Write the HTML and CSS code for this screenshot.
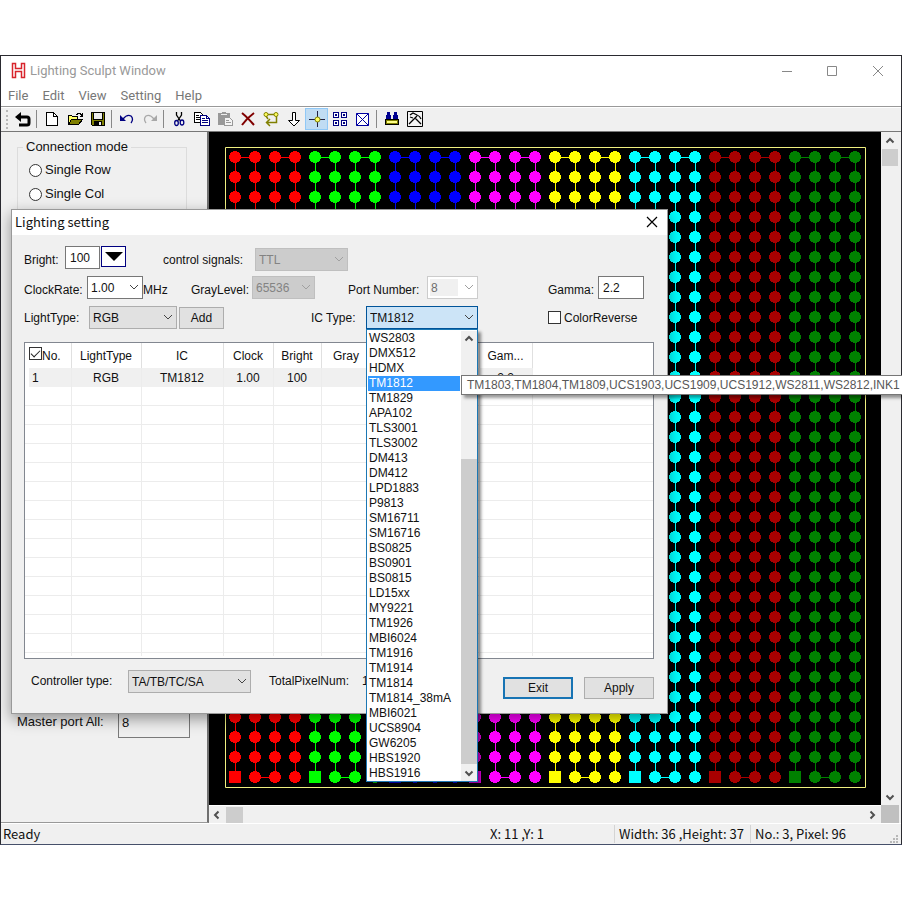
FILE: index.html
```
<!DOCTYPE html>
<html lang="en">
<head>
<meta charset="utf-8">
<title>Lighting Sculpt Window</title>
<link rel="stylesheet" href="styles.css">
</head>
<body>
<svg class="defs" aria-hidden="true">
  <defs>
    <symbol id="chevron" viewBox="0 0 10 10"><path d="M1 3l4 4 4-4" fill="none" stroke="currentColor"/></symbol>
    <symbol id="arrow" viewBox="0 0 10 10"><path d="M1.500 6.500L5 3l3.500 3.500" fill="none" stroke="currentColor" stroke-width="2"/></symbol>
    <symbol id="block" viewBox="0 0 80 640" overflow="visible">
      <path class="wire" d="M.5 0V620M20.500 0V620M40.500 0V620M60.500 0V620M0 .5H20M40 .5H60M20 620.500H40"/>
      <path class="dots" d="M0 0V601M20 0V621M40 0V621M60 0V621"/>
      <path d="M-6 614H6V626H-6z" fill="currentColor"/>
    </symbol>
  </defs>
</svg>

<div class="window">
  <header class="titlebar">
    <svg class="logo" width="16" height="17" viewBox="0 0 16 17"><path d="M1.500 1.500h3v5h6v-5h3v14h-3v-6h-6v6h-3z" fill="#fff" stroke="#d8242c" stroke-width="1.500"/></svg>
    <h1 class="caption">Lighting Sculpt Window</h1>
    <div class="captions">
      <button class="cap" aria-label="Minimize"><svg width="12" height="12"><path d="M1 6.500h10" stroke="#888"/></svg></button>
      <button class="cap" aria-label="Maximize"><svg width="12" height="12"><path d="M1.500 1.500h9v9h-9z" fill="none" stroke="#888"/></svg></button>
      <button class="cap" aria-label="Close"><svg width="12" height="12"><path d="M1 1l10 10M11 1L1 11" stroke="#888"/></svg></button>
    </div>
  </header>
  <nav class="menubar">
    <button>File</button><button>Edit</button><button>View</button><button>Setting</button><button>Help</button>
  </nav>

  <div class="toolbar">
    <button aria-label="Back"><svg viewBox="0 0 16 16"><path d="M0 6l6-5v10z"/><path d="M5 6h7q2 0 2 2v4q0 2-2 2H4" fill="none" stroke="#000" stroke-width="3"/></svg></button>
    <i></i>
    <button aria-label="New"><svg viewBox="0 0 16 16" shape-rendering="crispEdges"><path d="M2.500 1.500h7l4 4v9h-11z" fill="#fff" stroke="#000"/><path d="M9.500 1.500v4h4" fill="none" stroke="#000"/></svg></button>
    <button aria-label="Open"><svg viewBox="0 0 16 16" shape-rendering="crispEdges"><path d="M1.500 13.500v-9h3l1 1h5v3" fill="#ffff66" stroke="#000"/><path d="M1.500 13.500l3-5h11l-4 5z" fill="#808000" stroke="#000"/><path d="M9 3.500h1v-1h3v1h1v1h1M15.500 2v3h-3" fill="none" stroke="#000"/></svg></button>
    <button aria-label="Save"><svg viewBox="0 0 16 16" shape-rendering="crispEdges"><path d="M1.500 1.500h13v13h-12l-1-1z" fill="#808000" stroke="#000"/><path d="M4 2h8v6H4z" fill="#eee"/><path d="M3.500 2v6.500h9V2" fill="none" stroke="#000"/><path d="M4 10h8v4H4z"/><path d="M9 11h2v3H9z" fill="#eee"/></svg></button>
    <i></i>
    <button aria-label="Undo"><svg viewBox="0 0 16 16"><path d="M1 4v6h6z" fill="#000080"/><path d="M4 8q4-5 8-3 3 3 0 7" fill="none" stroke="#000080" stroke-width="1.300"/></svg></button>
    <button aria-label="Redo"><svg viewBox="0 0 16 16"><path d="M15 4v6H9z" fill="#a8a8a8"/><path d="M12 8q-4-5-8-3-3 3 0 7" fill="none" stroke="#a8a8a8" stroke-width="1.300"/></svg></button>
    <i></i>
    <button aria-label="Cut"><svg viewBox="0 0 16 16"><path d="M5.500 1v3l4 6M10.500 1v3l-4 6" fill="none" stroke="#000" stroke-width="1.300"/><ellipse cx="5.500" cy="12" rx="1.800" ry="2.500" fill="none" stroke="#000080" stroke-width="1.300"/><ellipse cx="11" cy="11.500" rx="1.800" ry="2.500" fill="none" stroke="#000080" stroke-width="1.300"/></svg></button>
    <button aria-label="Copy"><svg viewBox="0 0 16 16" shape-rendering="crispEdges"><path d="M.5 1.500h6l3 3v7h-9z" fill="#fff" stroke="#000"/><path d="M2 4.500h3M2 6.500h4M2 8.500h4" stroke="#000"/><path d="M6.500 4.500h6l3 3v7h-9z" fill="#fff" stroke="#000080"/><path d="M12.500 4.500v3h3M8 7.500h3M8 9.500h6M8 11.500h6" fill="none" stroke="#000080"/></svg></button>
    <button aria-label="Paste"><svg viewBox="0 0 16 16" shape-rendering="crispEdges"><path d="M1 2h4V1h4v1h4v12H1z" fill="#999"/><path d="M4 3h6v1H4z" fill="#eee"/><path d="M7.500 6.500h5l3 3v5h-8z" fill="#f4f4f4" stroke="#999"/><path d="M9 9.500h3M9 11.500h5" stroke="#999"/></svg></button>
    <button aria-label="Delete"><svg viewBox="0 0 16 16"><path d="M2 2q5 4 12 12M14 2Q7 7 2 14" fill="none" stroke="#800000" stroke-width="2"/></svg></button>
    <button aria-label="Link nodes"><svg viewBox="0 0 16 16"><path d="M5 3.500h7M13.500 5v6.500H4M3 5l2 3M7 8l-3.500 3.500L7 15" fill="none" stroke="#808000" stroke-width="1.500"/><circle cx="3" cy="3.500" r="2" fill="#ffff60" stroke="#808000"/><circle cx="13" cy="3.500" r="2" fill="#ffff60" stroke="#808000"/></svg></button>
    <button aria-label="Download"><svg viewBox="0 0 16 16"><path d="M6.500 1.500h3v8h4l-5.500 5.500-5.500-5.500h4z" fill="#fff" stroke="#000"/></svg></button>
    <button class="on" aria-label="Point mode"><svg viewBox="0 0 16 16"><path d="M8.500 0v16M0 8.500h16" stroke="#202040"/><circle cx="8.500" cy="8.500" r="2.500" fill="#ffff60" stroke="#808000"/></svg></button>
    <button aria-label="Grid"><svg viewBox="0 0 16 16" shape-rendering="crispEdges"><path d="M1.500 1.500h5v5h-5zM9.500 1.500h5v5h-5zM1.500 9.500h5v5h-5zM9.500 9.500h5v5h-5z" fill="#fff" stroke="#000080"/><path d="M3.500 3.500h1v1h-1zM11.500 3.500h1v1h-1zM3.500 11.500h1v1h-1zM11.500 11.500h1v1h-1z" stroke="#000080" fill="none"/></svg></button>
    <button aria-label="Clear area"><svg viewBox="0 0 16 16"><path d="M1.500 2.500h12v12h-12zl12 12M13.500 2.500l-12 12" fill="#fff" stroke="#0000a0"/></svg></button>
    <i></i>
    <button aria-label="Lamp setup"><svg viewBox="0 0 16 16" shape-rendering="crispEdges"><path d="M3 1h3v3h1v4H2V4h1zM10 1h3v3h1v4H9V4h1z" fill="#000090"/><path d="M1.500 8.500h13v5h-13z" fill="#808000" stroke="#000"/><path d="M3 10h10v2H3z" fill="#ff8"/></svg></button>
    <button aria-label="Tools"><svg viewBox="0 0 16 16"><path d="M.5.500h15v15H.500z" fill="#f4f4f4" stroke="#000"/><path d="M3 4l3-2 4 2q3 1 4 4M2 13l8-8M8 7l6 6M3 6l3 1" fill="none" stroke="#000" stroke-width="1.300"/></svg></button>
  </div>

  <main class="workspace">
    <aside class="side">
      <fieldset class="modes">
        <legend>Connection mode</legend>
        <label><input type="radio" name="mode">Single Row</label>
        <label><input type="radio" name="mode">Single Col</label>
      </fieldset>
      <div class="master">
        <label for="master">Master port All:</label>
        <input id="master" type="text" value="8">
      </div>
    </aside>

    <div class="canvas">
      <svg width="672" height="673" viewBox="0 0 672 673">
        <path d="M16.500 15.500h640v640h-640z" fill="none" stroke="#f0f080"/>
        <use href="#block" x="26" y="25" width="80" height="640" color="#f00"/>
        <use href="#block" x="106" y="25" width="80" height="640" color="#0f0"/>
        <use href="#block" x="186" y="25" width="80" height="640" color="#00f"/>
        <use href="#block" x="266" y="25" width="80" height="640" color="#f0f"/>
        <use href="#block" x="346" y="25" width="80" height="640" color="#ff0"/>
        <use href="#block" x="426" y="25" width="80" height="640" color="#0ff"/>
        <use href="#block" x="506" y="25" width="80" height="640" color="#a80000"/>
        <use href="#block" x="586" y="25" width="80" height="640" color="#008000"/>
      </svg>
    </div>
    <div class="bar bar-v">
      <svg width="10" height="10"><use href="#arrow"/></svg><span class="thumb"></span>
      <svg class="end down" width="10" height="10"><use href="#arrow"/></svg>
    </div>
    <div class="bar bar-h">
      <svg class="left" width="10" height="10"><use href="#arrow"/></svg><span class="thumb"></span>
      <svg class="end right" width="10" height="10"><use href="#arrow"/></svg>
    </div>
    <div class="corner"></div>
  </main>

  <footer class="status">
    <span class="ready">Ready</span>
    <span class="pos">X: 11 ,Y: 1</span>
    <span class="size">Width: 36 ,Height: 37</span>
    <span class="pixel">No.: 3, Pixel: 96</span>
    <svg class="grip" width="9" height="9" fill="#b8b8b8"><path d="M6 0h2v2H6zM3 3h2v2H3zM6 3h2v2H6zM0 6h2v2H0zM3 6h2v2H3zM6 6h2v2H6z"/></svg>
  </footer>

  <section class="dialog" role="dialog" aria-labelledby="dlg-title">
    <header class="dlg-head">
      <h2 id="dlg-title">Lighting setting</h2>
      <button aria-label="Close dialog"><svg width="12" height="12"><path d="M1 1l10 10M11 1L1 11" stroke="#000" stroke-width="1.200"/></svg></button>
    </header>
    <form class="dlg-body">
      <div class="row row-1">
        <label class="l-bright" for="bright">Bright:</label>
        <input id="bright" class="text w-bright" type="text" value="100">
        <button type="button" class="drop" aria-label="Choose brightness"><svg width="18" height="10"><path d="M0 0h18l-9 9z"/></svg></button>
        <label class="l-signals" for="signals">control signals:</label>
        <span class="combo off w-signals"><select id="signals" disabled><option>TTL</option></select><svg><use href="#chevron"/></svg></span>
      </div>
      <div class="row row-2">
        <label class="l-clock" for="clock">ClockRate:</label>
        <span class="combo white w-clock"><select id="clock"><option>1.00</option></select><svg><use href="#chevron"/></svg></span>
        <span class="unit">MHz</span>
        <label class="l-gray" for="gray">GrayLevel:</label>
        <span class="combo off w-gray"><select id="gray" disabled><option>65536</option></select><svg><use href="#chevron"/></svg></span>
        <label class="l-port" for="port">Port Number:</label>
        <span class="combo port w-port"><select id="port" disabled><option>8</option></select><svg><use href="#chevron"/></svg></span>
        <label class="l-gamma" for="gamma">Gamma:</label>
        <input id="gamma" class="text w-gamma" type="text" value="2.2">
      </div>
      <div class="row row-3">
        <label class="l-light" for="light">LightType:</label>
        <span class="combo w-light"><select id="light"><option>RGB</option></select><svg><use href="#chevron"/></svg></span>
        <button type="button" class="push add">Add</button>
        <label class="l-ic" for="ic">IC Type:</label>
        <span class="combo open w-ic">
          <select id="ic"><option>TM1812</option></select><svg><use href="#chevron"/></svg>
          <div class="list">
            <ul role="listbox" aria-label="IC Type">
              <li role="option">WS2803</li><li role="option">DMX512</li><li role="option">HDMX</li>
              <li role="option" aria-selected="true">TM1812<span class="tip" role="tooltip">TM1803,TM1804,TM1809,UCS1903,UCS1909,UCS1912,WS2811,WS2812,INK1</span></li>
              <li role="option">TM1829</li><li role="option">APA102</li><li role="option">TLS3001</li><li role="option">TLS3002</li>
              <li role="option">DM413</li><li role="option">DM412</li><li role="option">LPD1883</li><li role="option">P9813</li>
              <li role="option">SM16711</li><li role="option">SM16716</li><li role="option">BS0825</li><li role="option">BS0901</li>
              <li role="option">BS0815</li><li role="option">LD15xx</li><li role="option">MY9221</li><li role="option">TM1926</li>
              <li role="option">MBI6024</li><li role="option">TM1916</li><li role="option">TM1914</li><li role="option">TM1814</li>
              <li role="option">TM1814_38mA</li><li role="option">MBI6021</li><li role="option">UCS8904</li><li role="option">GW6205</li>
              <li role="option">HBS1920</li><li role="option">HBS1916</li>
            </ul>
            <div class="list-bar">
              <svg width="10" height="10"><use href="#arrow"/></svg>
              <span class="list-thumb"></span>
              <svg class="down" width="10" height="10"><use href="#arrow"/></svg>
            </div>
          </div>
        </span>
        <label class="check"><input type="checkbox">ColorReverse</label>
      </div>

      <div class="grid">
        <table>
          <colgroup><col class="c46"><col class="c70"><col class="c82"><col class="c50"><col class="c48"><col class="c50"><col class="c108"><col class="c53"><col></colgroup>
          <thead><tr>
            <th class="no"><label><input type="checkbox" checked>No.</label></th>
            <th>LightType</th><th>IC</th><th>Clock</th><th>Bright</th><th>Gray</th><th></th><th>Gam...</th><th></th>
          </tr></thead>
          <tbody>
            <tr class="entry"><td class="no">1</td><td>RGB</td><td>TM1812</td><td>1.00</td><td>100</td><td></td><td></td><td>2.2</td><td></td></tr>
            <tr class="blank"><td></td><td></td><td></td><td></td><td></td><td></td><td></td><td></td><td></td></tr>
          </tbody>
        </table>
      </div>

      <div class="foot">
        <label for="ctl">Controller type:</label>
        <span class="combo w-ctl"><select id="ctl"><option>TA/TB/TC/SA</option></select><svg><use href="#chevron"/></svg></span>
        <span class="total">TotalPixelNum:</span><span>1</span>
        <button type="button" class="push exit">Exit</button>
        <button type="button" class="push apply">Apply</button>
      </div>
    </form>
  </section>
</div>
</body>
</html>
```

FILE: styles.css
```
* { box-sizing: border-box; }
body { margin: 0; padding: 55px 0; background: #fff; color: #111; font: 12px/16px "Liberation Sans", Arial, sans-serif; overflow-x: hidden; }
button, input, select { font: inherit; color: inherit; margin: 0; }
button { padding: 0; border: 0; background: none; }
h1, h2 { margin: 0; font-weight: normal; }
.defs { position: absolute; width: 0; height: 0; }

.window { position: relative; border: 1px solid #2a2a30; border-bottom-color: #46506a; background: #f0f0f0; }

.titlebar { display: flex; align-items: center; height: 29px; padding: 0 8px 0 10px; background: #fff; }
.caption { margin-left: 3px; font: 13px/18px Roboto, "Noto Sans", sans-serif; color: #999; }
.captions { display: flex; margin-left: auto; }
.cap { width: 45px; height: 28px; }
.cap:last-child { width: 30px; margin-left: 9px; }
.cap svg { vertical-align: middle; }
.menubar { display: flex; gap: 14px; height: 22px; padding: 1px 0 0 7px; background: #fff; border-bottom: 1px solid #999; }
.menubar button { font: 13px/18px Roboto, "Noto Sans", sans-serif; color: #777; }

.toolbar { display: flex; align-items: flex-start; height: 25px; padding-left: 10px; border-top: 1px solid #fff; border-bottom: 1px solid #777; position: relative; }
.toolbar::before { content: ""; position: absolute; left: 5px; top: 2px; bottom: 2px; border-left: 2px dotted #b8b8b8; }
.toolbar button { width: 23px; height: 22px; }
.toolbar button.on { background: #c0dcf3; outline: 1px solid #90c8f6; outline-offset: -1px; }
.toolbar svg { display: block; width: 16px; height: 16px; margin: 0 auto; }
.toolbar i { width: 6px; }
.toolbar i::before { content: ""; display: block; width: 1px; height: 18px; margin: 2px 0 0 2px; background: #888; }

.workspace { display: grid; grid-template-columns: 208px 1fr 18px; grid-template-rows: 673px 18px; padding-right: 2px; }
.side { grid-row: 1 / 3; display: flex; flex-direction: column; justify-content: space-between; padding: 6px 20px 84px 16px; border-right: 2px solid #707070; border-bottom: 1px solid #999; font-size: 13px; }
.modes { margin: 0; padding: 0 0 130px 11px; border: 1px solid #dcdcdc; }
.modes legend { padding: 0 3px; margin-left: -6px; line-height: 18px; }
.modes label { display: flex; align-items: center; gap: 3px; height: 24px; }
.modes legend + label { margin-top: 2px; }
.modes input { appearance: none; width: 13px; height: 13px; border: 1px solid #333; border-radius: 50%; background: #fff; }
.master { display: flex; align-items: center; justify-content: space-between; margin-right: -3px; }
.master input { width: 72px; height: 32px; padding: 0 3px; border: 1px solid #7a7a7a; background: #f0f0f0; }
.canvas { background: #000; overflow: hidden; min-width: 0; }
.canvas svg { display: block; }
.wire { fill: none; stroke: currentColor; stroke-width: 1; shape-rendering: crispEdges; }
.dots { fill: none; stroke: currentColor; stroke-width: 12; stroke-linecap: round; stroke-dasharray: 0 20; shape-rendering: crispEdges; }
.bar { display: flex; align-items: center; color: #505050; }
.bar .thumb { background: #cdcdcd; }
.bar .end { margin-left: auto; }
.bar-v { flex-direction: column; padding: 4px 0 3px; }
.bar-v .thumb { width: 16px; height: 17px; margin-top: 3px; }
.bar-v .end { margin: auto 0 0; }
.bar-h { padding: 0 4px 0 3px; border-top: 1px solid #fff; }
.bar-h .thumb { width: 17px; height: 16px; margin-left: 4px; }
.corner { background: #c0c0c0; }
.down { transform: rotate(180deg); }
.left { transform: rotate(-90deg); }
.right { transform: rotate(90deg); }

.status { display: flex; align-items: center; height: 21px; padding: 0 2px; border-top: 1px solid #fff; font: 13px/18px "Noto Sans CJK SC", "Noto Sans", sans-serif; }
.ready { flex: 1; }
.pos { width: 124px; }
.size { width: 136px; padding-left: 4px; border-left: 1px solid #d4d4d4; }
.pixel { width: 140px; padding-left: 4px; border-left: 1px solid #d4d4d4; }
.grip { align-self: flex-end; }

.dialog { position: absolute; left: 10px; top: 153px; width: 657px; border: 1px solid #999; background: #f0f0f0; box-shadow: 0 5px 14px rgba(0, 0, 0, .4); }
.dlg-head { display: flex; align-items: center; justify-content: space-between; height: 25px; padding: 0 9px 1px 3px; background: #fff; }
.dlg-head h2 { font: 12px/18px "DejaVu Sans", sans-serif; font: 13px/18px "Noto Sans CJK SC", "Noto Sans", sans-serif; }
.dlg-head button { height: 12px; }
.dlg-head svg { display: block; }
.dlg-body { padding: 11px 13px 14px 12px; }
.row { display: flex; align-items: center; white-space: nowrap; }
.row-1 { height: 26px; align-items: flex-start; }
.row-1 label { line-height: 28px; }
.row-2 { height: 23px; margin-top: 4px; }
.row-2 label, .row-2 .unit { line-height: 18px; padding-top: 4px; }
.row-3 { height: 23px; margin-top: 7px; }
.text { height: 23px; padding: 0 4px; border: 1px solid #777; background: #fff; }
.drop { width: 25px; height: 21px; margin-left: 1px; border: 1px solid #000080; background: #fff; }
.drop svg { display: block; margin: 0 auto; }

.combo { position: relative; height: 23px; }
.combo select { appearance: none; display: block; width: 100%; height: 23px; padding: 0 3px; border: 1px solid #adadad; border-radius: 0; background: #e1e1e1; opacity: 1; }
.combo > svg { position: absolute; right: 4px; top: 6px; width: 10px; height: 10px; color: #444; pointer-events: none; }
.combo.white select { background: #fff; border-color: #777; }
.combo.off select { background: #ccc; border-color: #bfbfbf; color: #838383; }
.combo.off > svg, .combo.port > svg { color: #a0a0a0; }
.combo.port select { border-color: #ccc; color: #6d6d6d; background: linear-gradient(#f0f0f0, #f0f0f0) 2px 2px / 28px 17px no-repeat #fff; }
.combo.open select { background: #cce4f7; border-color: #005499; }

.l-bright { width: 41px; }
.l-clock { width: 63px; }
.l-light { width: 65px; }
.l-signals { width: 92px; margin-left: 37px; }
.l-gray { width: 61px; }
.l-port { width: 79px; margin-left: 33px; }
.l-gamma { width: 50px; margin-left: 70px; }
.l-ic { width: 55px; margin-left: 87px; }
.unit { width: 48px; }
.w-bright { width: 35px; }
.w-signals { width: 93px; margin-top: 2px; }
.w-clock { width: 56px; }
.w-gray { width: 63px; }
.w-port { width: 51px; }
.w-gamma { width: 46px; }
.w-light { width: 88px; }
.w-ic { width: 112px; }
.w-ctl { width: 123px; }

.push { height: 22px; border: 1px solid #adadad; background: #e1e1e1; }
.add { width: 45px; margin-left: 2px; }
.check { display: flex; align-items: center; gap: 3px; margin-left: 70px; }
.check input, .no input { appearance: none; width: 13px; height: 13px; border: 1px solid #333; background: #fff; }

.list { position: absolute; z-index: 3; left: 0; top: 23px; width: 112px; display: flex; padding-top: 1px; border: 1px solid #1c78b4; background: #fff; box-shadow: 3px 3px 3px rgba(0, 0, 0, .45); }
.list ul { flex: 1; margin: 0; padding: 0 1px; list-style: none; }
.list li { position: relative; height: 15px; padding-left: 1px; line-height: 15px; }
.list li[aria-selected] { background: #3399ff; color: #fff; }
.list-bar { display: flex; flex-direction: column; align-items: center; width: 16px; padding: 3px 0; background: #f0f0f0; color: #505050; }
.list-thumb { flex: 1; width: 16px; margin: 115px 0 4px; background: #cdcdcd; }
.tip { position: absolute; z-index: 4; left: 93px; top: -1px; height: 20px; padding: 0 20px 0 5px; border: 1px solid #767676; background: #fff; color: #575757; line-height: 18px; box-shadow: 3px 3px 3px rgba(0, 0, 0, .4); }

.grid { margin-top: 13px; height: 317px; padding-bottom: 2px; border: 1px solid #828790; background: #fff; }
table { width: 100%; height: 100%; table-layout: fixed; border-collapse: collapse; }
th, td { padding: 0; font-weight: normal; text-align: center; border-right: 1px solid #ececec; white-space: nowrap; }
th:last-child, td:last-child { border-right: 0; }
th { height: 25px; border-right-color: #e0e0e0; }
.entry td { height: 19px; background: #f0f0f0; }
.entry td:last-child { background: none; }
.entry .no { padding-left: 7px; text-align: left; background: linear-gradient(#f0f0f0, #f0f0f0) 4px 0 no-repeat; }
.blank td { background: repeating-linear-gradient(transparent 0 18px, #ececec 18px 19px); }
th.no { padding-left: 4px; }
.no label { display: flex; align-items: center; }
.no input { position: relative; bottom: 2px; }
.no input::after { content: ""; display: block; width: 8px; height: 4px; margin: 2px 0 0 1px; border: solid #222; border-width: 0 0 1px 1px; transform: rotate(-45deg); }
.c46 { width: 46px; } .c70 { width: 70px; } .c82 { width: 82px; } .c50 { width: 50px; }
.c48 { width: 48px; } .c108 { width: 108px; } .c53 { width: 53px; }

.foot { display: flex; align-items: flex-start; margin-top: 11px; padding-left: 7px; height: 29px; line-height: 23px; }
.foot label { width: 97px; }
.total { width: 93px; margin-left: 18px; }
.exit { width: 70px; margin-left: auto; border: 2px solid #1874b4; }
.apply { width: 70px; margin-left: 11px; }
.foot .push { align-self: flex-end; line-height: 16px; }
```
